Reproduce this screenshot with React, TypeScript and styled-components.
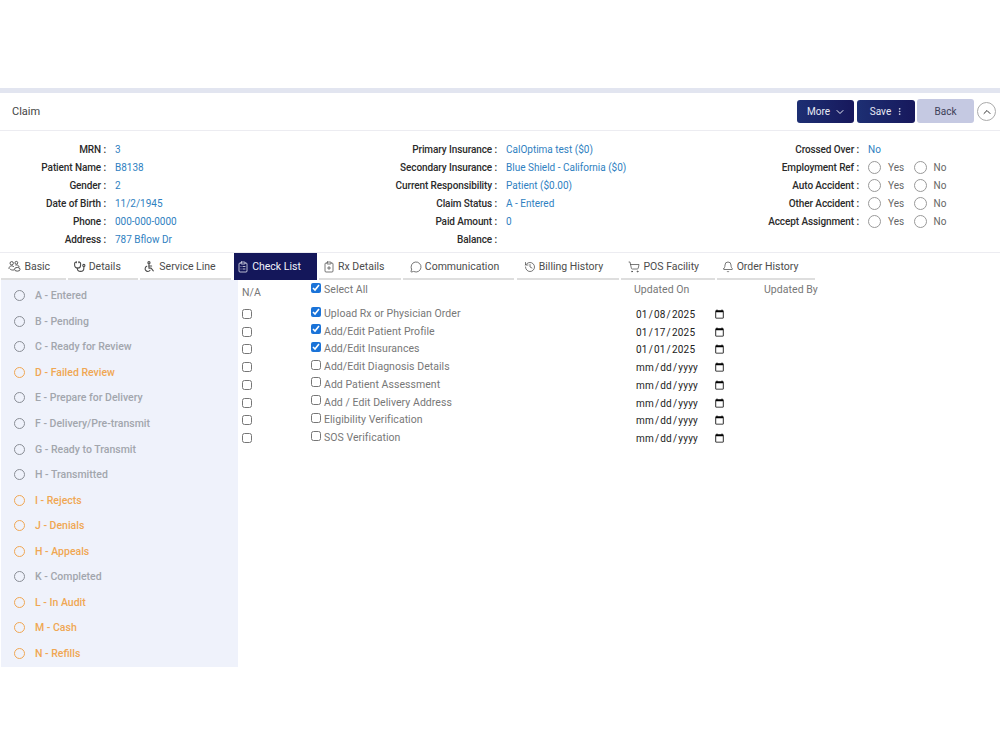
import React from "react";
import styled, { createGlobalStyle } from "styled-components";
import {
  Bell,
  ChevronDown,
  ChevronUp,
  ClipboardList,
  ClipboardPlus,
  EllipsisVertical,
  History,
  MessageCircle,
  ShoppingCart,
} from "lucide-react";
import { TbDisabled, TbStethoscope } from "react-icons/tb";

const GlobalStyle = createGlobalStyle`
  html, body {
    margin: 0;
    padding: 0;
    background: #fff;
    font-family: Roboto, "Liberation Sans", sans-serif;
  }
`;

const Page = styled.div`
  width: 1000px;
  height: 750px;
  padding-top: 88px;
  box-sizing: border-box;
  overflow: hidden;
`;

const TopBand = styled.div`
  height: 5px;
  background: #e2e5f0;
`;

const Header = styled.header`
  height: 37px;
  display: flex;
  align-items: center;
  justify-content: space-between;
  padding: 0 4px 0 12px;
  border-bottom: 1px solid #ececf1;
`;

const Title = styled.h1`
  margin: 0;
  font-size: 11px;
  font-weight: 400;
  color: #444;
`;

const Actions = styled.div`
  display: flex;
  align-items: center;
  gap: 3px;
`;

const DarkButton = styled.button<{ $w: number }>`
  width: ${(p) => p.$w}px;
  height: 23px;
  display: flex;
  align-items: center;
  justify-content: center;
  gap: 4px;
  padding: 0 0 0 2px;
  border: none;
  border-radius: 3px;
  background: linear-gradient(90deg, #1d2f73, #17185c);
  color: #e8eaf4;
  font: 400 10px Roboto, sans-serif;
`;

const BackButton = styled.button`
  width: 57px;
  height: 24px;
  margin: -1px 0 0 -1px;
  border: none;
  border-radius: 3px;
  background: #c5c9e2;
  color: #3d4058;
  font: 400 10px Roboto, sans-serif;
`;

const Collapse = styled.button`
  width: 19px;
  height: 19px;
  padding: 0;
  display: flex;
  align-items: center;
  justify-content: center;
  border: 1px solid #aaa;
  border-radius: 50%;
  background: #fff;
  color: #333;
`;

const InfoPanel = styled.section`
  height: 122px;
  box-sizing: border-box;
  padding-top: 9px;
  display: grid;
  grid-template-columns: 300px 400px 300px;
  border-bottom: 1px solid #ececf1;
`;

const InfoColumn = styled.div<{ $label: number }>`
  display: grid;
  grid-template-columns: ${(p) => p.$label}px 1fr;
  grid-auto-rows: 18px;
  column-gap: 9px;
  align-items: center;
  font-size: 10px;
`;

const Label = styled.span`
  text-align: right;
  font-weight: 500;
  letter-spacing: -0.1px;
  color: #2b2b2b;
`;

const Value = styled.span`
  color: #2f7fc1;
`;

const RadioPair = styled.span`
  display: flex;
  align-items: center;
`;

const RadioOption = styled.label`
  width: 45.5px;
  display: flex;
  align-items: center;
  gap: 7px;
  color: #666;
`;

const Radio = styled.span<{ $size?: number; $color?: string }>`
  width: ${(p) => p.$size ?? 13}px;
  height: ${(p) => p.$size ?? 13}px;
  flex: none;
  box-sizing: border-box;
  border: 1px solid ${(p) => p.$color ?? "#999"};
  border-radius: 50%;
`;

const Tabs = styled.nav`
  height: 27px;
  display: flex;
  padding-left: 1px;
`;

const Tab = styled.div<{ $w: number; $pad: number; $active?: boolean }>`
  width: ${(p) => p.$w}px;
  margin-right: 2.5px;
  padding: 2px ${(p) => p.$pad}px 0 0;
  display: flex;
  align-items: center;
  justify-content: center;
  gap: 3px;
  box-sizing: border-box;
  white-space: nowrap;
  font-size: 10.5px;
  border-bottom: 2px solid ${(p) => (p.$active ? "#14175a" : "#dedede")};
  background: ${(p) => (p.$active ? "#14175a" : "transparent")};
  color: ${(p) => (p.$active ? "#f2f3fa" : "#4c4c4c")};
  svg {
    flex: none;
  }
`;

const Body = styled.div`
  display: flex;
`;

const Sidebar = styled.ul`
  width: 237px;
  height: 387px;
  margin: 0 0 0 1px;
  padding: 3px 0 0 13px;
  box-sizing: border-box;
  list-style: none;
  background: #eff2fb;
`;

const Status = styled.li<{ $warn?: boolean }>`
  height: 25.55px;
  display: flex;
  align-items: center;
  gap: 10px;
  font-size: 10.5px;
  font-weight: 500;
  color: ${(p) => (p.$warn ? "#f0a753" : "#a2a6ad")};
`;

const Checklist = styled.div`
  display: grid;
  grid-template-columns: 69px 323px 130px 110px;
  grid-template-rows: 24.65px;
  grid-auto-rows: 17.72px;
  align-items: center;
  padding: 0 0 0 4px;
  height: fit-content;
  font-size: 10.5px;
  letter-spacing: 0.05px;
  color: #777;
`;

const HeadCell = styled.div<{ $shift?: number }>`
  height: 18px;
  align-self: start;
  display: flex;
  align-items: center;
  gap: 3px;
  margin-top: ${(p) => p.$shift ?? 0}px;
`;

const CheckLabel = styled.label`
  display: flex;
  align-items: center;
  gap: 3px;
`;

const Check = styled.input.attrs({ type: "checkbox" })<{ $lift?: number }>`
  width: 10px;
  height: 10px;
  margin: 0;
  flex: none;
  accent-color: #1a73d8;
  position: relative;
  top: ${(p) => -(p.$lift ?? 0)}px;
`;

const DateField = styled.input.attrs({ type: "date" })`
  width: 90px;
  height: 16px;
  margin: 2px 0 0 1px;
  padding: 0;
  border: none;
  background: transparent;
  color: #222;
  font: 400 10px Roboto, sans-serif;
  letter-spacing: 0.2px;
  &::-webkit-calendar-picker-indicator {
    width: 11px;
    height: 11px;
    margin: 0;
    padding: 0;
  }
`;

// people group used on the Basic tab
function PeopleIcon({ size }: { size: number }) {
  return (
    <svg width={size} height={size} viewBox="0 0 14 14" fill="none" stroke="currentColor" strokeWidth={1}>
      <circle cx="4" cy="3.5" r="1.8" />
      <circle cx="9" cy="3" r="1.5" />
      <path d="M1 9.5c0-2 1.3-3.2 3-3.2 1 0 1.8.4 2.3 1" />
      <path d="M8 5.5c1.5-.5 3.5 0 4 2" />
      <ellipse cx="10" cy="10" rx="3" ry="2" />
      <path d="M2 9.5c1 1.2 2.5 1.5 4.5 1.2" />
    </svg>
  );
}

const infoLeft = [
  ["MRN", "3"],
  ["Patient Name", "B8138"],
  ["Gender", "2"],
  ["Date of Birth", "11/2/1945"],
  ["Phone", "000-000-0000"],
  ["Address", "787 Bflow Dr"],
];

const infoMiddle = [
  ["Primary Insurance", "CalOptima test ($0)"],
  ["Secondary Insurance", "Blue Shield - California ($0)"],
  ["Current Responsibility", "Patient ($0.00)"],
  ["Claim Status", "A - Entered"],
  ["Paid Amount", "0"],
  ["Balance", ""],
];

const accidents = ["Employment Ref", "Auto Accident", "Other Accident", "Accept Assignment"];

const tabs = [
  { text: "Basic", w: 64.5, pad: 8, icon: <PeopleIcon size={13} /> },
  { text: "Details", w: 69.5, pad: 12, icon: <TbStethoscope size={13} /> },
  { text: "Service Line", w: 91, pad: 12, icon: <TbDisabled size={13} /> },
  { text: "Check List", w: 83, pad: 12, icon: <ClipboardList size={12} strokeWidth={1.5} />, active: true },
  { text: "Rx Details", w: 81.5, pad: 12, icon: <ClipboardPlus size={12} strokeWidth={1.5} /> },
  { text: "Communication", w: 111, pad: 8, icon: <MessageCircle size={12} strokeWidth={1.5} /> },
  { text: "Billing History", w: 102, pad: 8, icon: <History size={12} strokeWidth={1.5} /> },
  { text: "POS Facility", w: 93.5, pad: 8, icon: <ShoppingCart size={12} strokeWidth={1.5} /> },
  { text: "Order History", w: 98, pad: 12, icon: <Bell size={12} strokeWidth={1.5} /> },
];

const statuses: [string, boolean][] = [
  ["A - Entered", false],
  ["B - Pending", false],
  ["C - Ready for Review", false],
  ["D - Failed Review", true],
  ["E - Prepare for Delivery", false],
  ["F - Delivery/Pre-transmit", false],
  ["G - Ready to Transmit", false],
  ["H - Transmitted", false],
  ["I - Rejects", true],
  ["J - Denials", true],
  ["H - Appeals", true],
  ["K - Completed", false],
  ["L - In Audit", true],
  ["M - Cash", true],
  ["N - Refills", true],
];

const checklist = [
  { text: "Upload Rx or Physician Order", date: "2025-01-08", done: true },
  { text: "Add/Edit Patient Profile", date: "2025-01-17", done: true },
  { text: "Add/Edit Insurances", date: "2025-01-01", done: true },
  { text: "Add/Edit Diagnosis Details", date: "", done: false },
  { text: "Add Patient Assessment", date: "", done: false },
  { text: "Add / Edit Delivery Address", date: "", done: false },
  { text: "Eligibility Verification", date: "", done: false },
  { text: "SOS Verification", date: "", done: false },
];

export default function App() {
  return (
    <Page>
      <GlobalStyle />
      <TopBand />
      <Header>
        <Title>Claim</Title>
        <Actions>
          <DarkButton $w={57}>
            More <ChevronDown size={12} />
          </DarkButton>
          <DarkButton $w={58}>
            Save <EllipsisVertical size={9} />
          </DarkButton>
          <BackButton>Back</BackButton>
          <Collapse>
            <ChevronUp size={12} />
          </Collapse>
        </Actions>
      </Header>

      <InfoPanel>
        <InfoColumn $label={106}>
          {infoLeft.map(([label, value]) => (
            <React.Fragment key={label}>
              <Label>{label} :</Label>
              <Value>{value}</Value>
            </React.Fragment>
          ))}
        </InfoColumn>
        <InfoColumn $label={197}>
          {infoMiddle.map(([label, value]) => (
            <React.Fragment key={label}>
              <Label>{label} :</Label>
              <Value>{value}</Value>
            </React.Fragment>
          ))}
        </InfoColumn>
        <InfoColumn $label={159}>
          <Label>Crossed Over :</Label>
          <Value>No</Value>
          {accidents.map((label) => (
            <React.Fragment key={label}>
              <Label>{label} :</Label>
              <RadioPair>
                <RadioOption>
                  <Radio />
                  Yes
                </RadioOption>
                <RadioOption>
                  <Radio />
                  No
                </RadioOption>
              </RadioPair>
            </React.Fragment>
          ))}
        </InfoColumn>
      </InfoPanel>

      <Tabs>
        {tabs.map(({ text, w, pad, icon, active }) => (
          <Tab key={text} $w={w} $pad={pad} $active={active}>
            {icon}
            {text}
          </Tab>
        ))}
      </Tabs>

      <Body>
        <Sidebar>
          {statuses.map(([text, warn]) => (
            <Status key={text} $warn={warn}>
              <Radio $size={11} $color={warn ? "#f0a753" : "#8a8e96"} />
              {text}
            </Status>
          ))}
        </Sidebar>
        <Checklist>
          <HeadCell $shift={3}>N/A</HeadCell>
          <HeadCell>
            <Check defaultChecked $lift={1} />
            Select All
          </HeadCell>
          <HeadCell>Updated On</HeadCell>
          <HeadCell>Updated By</HeadCell>
          {checklist.map((item) => (
            <React.Fragment key={item.text}>
              <Check $lift={-0.5} />
              <CheckLabel>
                <Check defaultChecked={item.done} $lift={2} />
                {item.text}
              </CheckLabel>
              <DateField defaultValue={item.date} />
              <span />
            </React.Fragment>
          ))}
        </Checklist>
      </Body>
    </Page>
  );
}
